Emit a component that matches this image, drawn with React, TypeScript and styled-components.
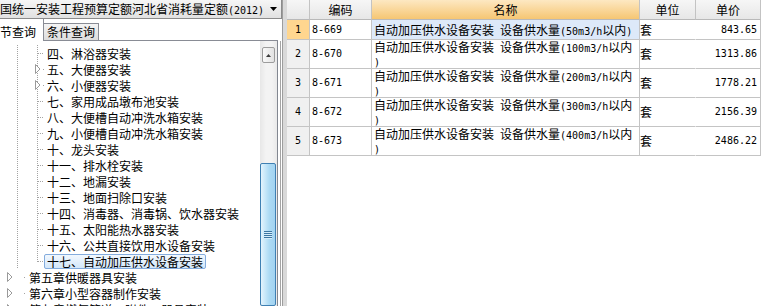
import styled, { createGlobalStyle, css } from "styled-components";

const GlobalStyle = createGlobalStyle`
  html, body {
    margin: 0;
    padding: 0;
    background: #fff;
  }
  body {
    font-family: "Noto Sans CJK SC", "DejaVu Sans", sans-serif;
    font-size: 12px;
    color: #000;
  }
`;

const Screen = styled.div`
  display: flex;
  width: 771px;
  height: 306px;
  overflow: hidden;
  background: #fff;
`;

const LeftPanel = styled.div`
  width: 282px;
  flex: none;
  display: flex;
  flex-direction: column;
`;

const Combo = styled.div`
  height: 19px;
  flex: none;
  box-sizing: border-box;
  display: flex;
  align-items: center;
  padding-right: 4px;
  border-right: 1px solid #8b8b8b;
  border-bottom: 1px solid #8b8b8b;
  background: linear-gradient(#f6f6f6, #e1e1e1);
  & > span {
    flex: 1;
    white-space: nowrap;
    line-height: 18px;
  }
`;

const TabStrip = styled.div`
  height: 22px;
  flex: none;
  display: flex;
  align-items: flex-end;
  margin-right: 4px;
`;

const Tab = styled.div<{ $active?: boolean }>`
  box-sizing: border-box;
  white-space: nowrap;
  line-height: 16px;
  ${(p) =>
    p.$active
      ? css`
          width: 44px;
          height: 22px;
          padding-top: 5px;
          background: #fff;
          border-right: 1px solid #898c95;
        `
      : css`
          height: 18px;
          padding: 0 3px;
          border: 1px solid #898c95;
          border-left: none;
          background: linear-gradient(#f4f4f4, #dcdcdc);
        `}
`;

const TabFill = styled.div`
  flex: 1;
  align-self: stretch;
  border-bottom: 1px solid #898c95;
`;

const TreeFrame = styled.div`
  flex: 1;
  min-height: 0;
  display: flex;
  margin-right: 1px;
  border-right: 1px solid #a4a4a4;
`;

const TreeBox = styled.div`
  flex: 1;
  display: flex;
  margin-right: 2px;
  border-right: 1px solid #828790;
  overflow: hidden;
`;

const TreeList = styled.div`
  flex: 1;
  display: flex;
  flex-direction: column;
  padding-top: 4px;
  overflow: hidden;
`;

const TreeRow = styled.div`
  height: 16px;
  flex: none;
  display: flex;
  align-items: center;
  white-space: nowrap;
  & > svg {
    flex: none;
  }
`;

const Label = styled.span<{ $selected?: boolean }>`
  box-sizing: border-box;
  height: 15px;
  line-height: 13px;
  padding: 0 2px;
  border: 1px solid transparent;
  border-radius: 2px;
  ${(p) =>
    p.$selected &&
    css`
      align-self: flex-end;
      border-color: #84acdd;
      background: linear-gradient(#f2f8fe, #d3e7fa);
    `}
`;

const ScrollBar = styled.div`
  width: 17px;
  flex: none;
  display: flex;
  flex-direction: column;
  padding-top: 6px;
  box-sizing: border-box;
  overflow: hidden;
  background: linear-gradient(90deg, #e7e7e7, #f3f3f3 35%, #f3f3f3 70%, #e9e9e9);
`;

const ScrollButton = styled.div`
  width: 13px;
  height: 16px;
  margin-left: 2px;
  flex: none;
  box-sizing: border-box;
  display: flex;
  align-items: center;
  justify-content: center;
  border: 1px solid #9c9c9c;
  border-radius: 2px;
  background: linear-gradient(90deg, #fafafa, #e2e2e2);
`;

const ScrollThumb = styled.div`
  width: 16px;
  height: 143px;
  margin-top: 100px;
  flex: none;
  box-sizing: border-box;
  display: flex;
  align-items: center;
  justify-content: center;
  border: 1px solid #3f80b3;
  border-radius: 2px;
  background: linear-gradient(90deg, #e4f4fd, #c3e5f8 35%, #acdaf4 60%, #a2d3f1);
`;

const Grip = styled.div`
  width: 8px;
  height: 8px;
  background: repeating-linear-gradient(#3d77a3 0 1px, #d6edfb 1px 2px);
`;

const Splitter = styled.div`
  width: 5px;
  flex: none;
  background: linear-gradient(90deg, #9d9d9d 0 1px, #d9d9d9 1px);
`;

const Grid = styled.div`
  flex: 1;
  display: grid;
  grid-template-columns: 23px 62px 268px 56px 65px 1fr;
  grid-template-rows: 20px 20px repeat(4, 29px);
  align-content: start;
  background: #fff;
  line-height: 14px;
`;

type Tone = "gray" | "orange" | "blank";

const HeadCell = styled.div<{ $tone: Tone }>`
  box-sizing: border-box;
  display: flex;
  align-items: center;
  justify-content: center;
  border-right: 1px solid ${(p) => (p.$tone === "blank" ? "transparent" : "#c3c3c3")};
  border-bottom: 1px solid ${(p) => (p.$tone === "blank" ? "transparent" : "#b9b9b9")};
  background: ${(p) =>
    p.$tone === "orange"
      ? "linear-gradient(#fde8c2, #f6c673)"
      : p.$tone === "gray"
      ? "linear-gradient(#f6f6f6, #e7e7e7)"
      : "#fff"};
`;

type Align = "left" | "center" | "right";

const Cell = styled.div<{ $align?: Align; $bg?: string; $noRight?: boolean }>`
  box-sizing: border-box;
  display: flex;
  align-items: center;
  justify-content: ${(p) =>
    p.$align === "center" ? "center" : p.$align === "right" ? "flex-end" : "flex-start"};
  padding: 0 ${(p) => (p.$align === "right" ? "3px" : "0")} 0
    ${(p) => (p.$align === "left" ? "2px" : "0")};
  border-right: 1px solid ${(p) => (p.$noRight ? "transparent" : "#c4c4c4")};
  border-bottom: 1px solid #c4c4c4;
  background: ${(p) => p.$bg || "#fff"};
  white-space: nowrap;
`;

const NameText = styled.div`
  display: flex;
  flex-direction: column;
  & > div {
    height: 14px;
    line-height: 14px;
  }
`;

const Filler = styled.div``;

const Latin = styled.span`
  font-family: "DejaVu Sans Mono", "Liberation Mono", monospace;
  font-size: 10px;
  line-height: 1;
`;

const mixed = (text: string) =>
  text.split(/([\x20-\x7e]+)/).map((part, i) =>
    /[\x20-\x7e]/.test(part) ? <Latin key={i}>{part}</Latin> : part
  );

type Node = {
  label: string;
  level: 1 | 2;
  folder?: boolean;
  last?: boolean;
  selected?: boolean;
};

const tree: Node[] = [
  { label: "四、淋浴器安装", level: 2 },
  { label: "五、大便器安装", level: 2, folder: true },
  { label: "六、小便器安装", level: 2, folder: true },
  { label: "七、家用成品墩布池安装", level: 2 },
  { label: "八、大便槽自动冲洗水箱安装", level: 2 },
  { label: "九、小便槽自动冲洗水箱安装", level: 2 },
  { label: "十、龙头安装", level: 2 },
  { label: "十一、排水栓安装", level: 2 },
  { label: "十二、地漏安装", level: 2 },
  { label: "十三、地面扫除口安装", level: 2 },
  { label: "十四、消毒器、消毒锅、饮水器安装", level: 2 },
  { label: "十五、太阳能热水器安装", level: 2 },
  { label: "十六、公共直接饮用水设备安装", level: 2 },
  { label: "十七、自动加压供水设备安装", level: 2, last: true, selected: true },
  { label: "第五章供暖器具安装", level: 1, folder: true },
  { label: "第六章小型容器制作安装", level: 1, folder: true },
  { label: "第七章燃气管道、附件、器具安装", level: 1, folder: true },
];

const LINE = "#a3a3a3";

const Guides = ({ node }: { node: Node }) => {
  if (node.level === 1) {
    return (
      <svg width={26} height={16}>
        <polygon points="7.5,3.5 12,8 7.5,12.5" fill="#fff" stroke="#9a9a9a" />
        <rect x={24} y={8} width={1} height={1} fill={LINE} />
      </svg>
    );
  }
  return (
    <svg width={44} height={16}>
      <line x1={17.5} y1={0} x2={17.5} y2={16} stroke={LINE} strokeDasharray="1 1" />
      <line x1={37.5} y1={0} x2={37.5} y2={node.last ? 9 : 16} stroke={LINE} strokeDasharray="1 1" />
      {node.folder ? (
        <>
          <polygon points="35.5,3.5 40,8 35.5,12.5" fill="#fff" stroke="#9a9a9a" />
          <rect x={43} y={8} width={1} height={1} fill={LINE} />
        </>
      ) : (
        <line x1={38} y1={8.5} x2={44} y2={8.5} stroke={LINE} strokeDasharray="1 1" />
      )}
    </svg>
  );
};

type Quota = {
  no: number;
  code: string;
  name: string[];
  unit: string;
  price: string;
};

const quotas: Quota[] = [
  { no: 1, code: "8-669", name: ["自动加压供水设备安装 设备供水量(50m3/h以内)"], unit: "套", price: "843.65" },
  { no: 2, code: "8-670", name: ["自动加压供水设备安装 设备供水量(100m3/h以内", ")"], unit: "套", price: "1313.86" },
  { no: 3, code: "8-671", name: ["自动加压供水设备安装 设备供水量(200m3/h以内", ")"], unit: "套", price: "1778.21" },
  { no: 4, code: "8-672", name: ["自动加压供水设备安装 设备供水量(300m3/h以内", ")"], unit: "套", price: "2156.39" },
  { no: 5, code: "8-673", name: ["自动加压供水设备安装 设备供水量(400m3/h以内", ")"], unit: "套", price: "2486.22" },
];

const App = () => {
  const current = 1;

  return (
    <>
      <GlobalStyle />
      <Screen>
        <LeftPanel>
          <Combo>
            <span>{mixed("国统一安装工程预算定额河北省消耗量定额(2012)")}</span>
            <svg width={7} height={4}>
              <polygon points="0,0 7,0 3.5,4" fill="#000" />
            </svg>
          </Combo>
          <TabStrip>
            <Tab $active>节查询</Tab>
            <Tab>条件查询</Tab>
            <TabFill />
          </TabStrip>
          <TreeFrame>
            <TreeBox>
              <TreeList>
                {tree.map((node) => (
                  <TreeRow key={node.label}>
                    <Guides node={node} />
                    <Label $selected={node.selected}>{node.label}</Label>
                  </TreeRow>
                ))}
              </TreeList>
              <ScrollBar>
                <ScrollButton>
                  <svg width={5} height={3}>
                    <polygon points="2.5,0 5,3 0,3" fill="#3c3c3c" />
                  </svg>
                </ScrollButton>
                <ScrollThumb>
                  <Grip />
                </ScrollThumb>
              </ScrollBar>
            </TreeBox>
          </TreeFrame>
        </LeftPanel>
        <Splitter />
        <Grid>
          <HeadCell $tone="gray" />
          <HeadCell $tone="gray">编码</HeadCell>
          <HeadCell $tone="orange">名称</HeadCell>
          <HeadCell $tone="gray">单位</HeadCell>
          <HeadCell $tone="gray">单价</HeadCell>
          <HeadCell $tone="blank" />
          {quotas.map((q) => (
            <Row key={q.no} quota={q} active={q.no === current} />
          ))}
        </Grid>
      </Screen>
    </>
  );
};

const Row = ({ quota, active }: { quota: Quota; active: boolean }) => (
  <>
    <Cell $align="center" $bg={active ? "#ffd68f" : "#f0f0f0"}>
      <Latin>{quota.no}</Latin>
    </Cell>
    <Cell $align="left">
      <Latin>{quota.code}</Latin>
    </Cell>
    <Cell $align="left" $bg={active ? "#dde9f9" : undefined}>
      <NameText>
        {quota.name.map((line, i) => (
          <div key={i}>{mixed(line)}</div>
        ))}
      </NameText>
    </Cell>
    <Cell $noRight>{quota.unit}</Cell>
    <Cell $align="right">
      <Latin>{quota.price}</Latin>
    </Cell>
    <Filler />
  </>
);

export default App;
